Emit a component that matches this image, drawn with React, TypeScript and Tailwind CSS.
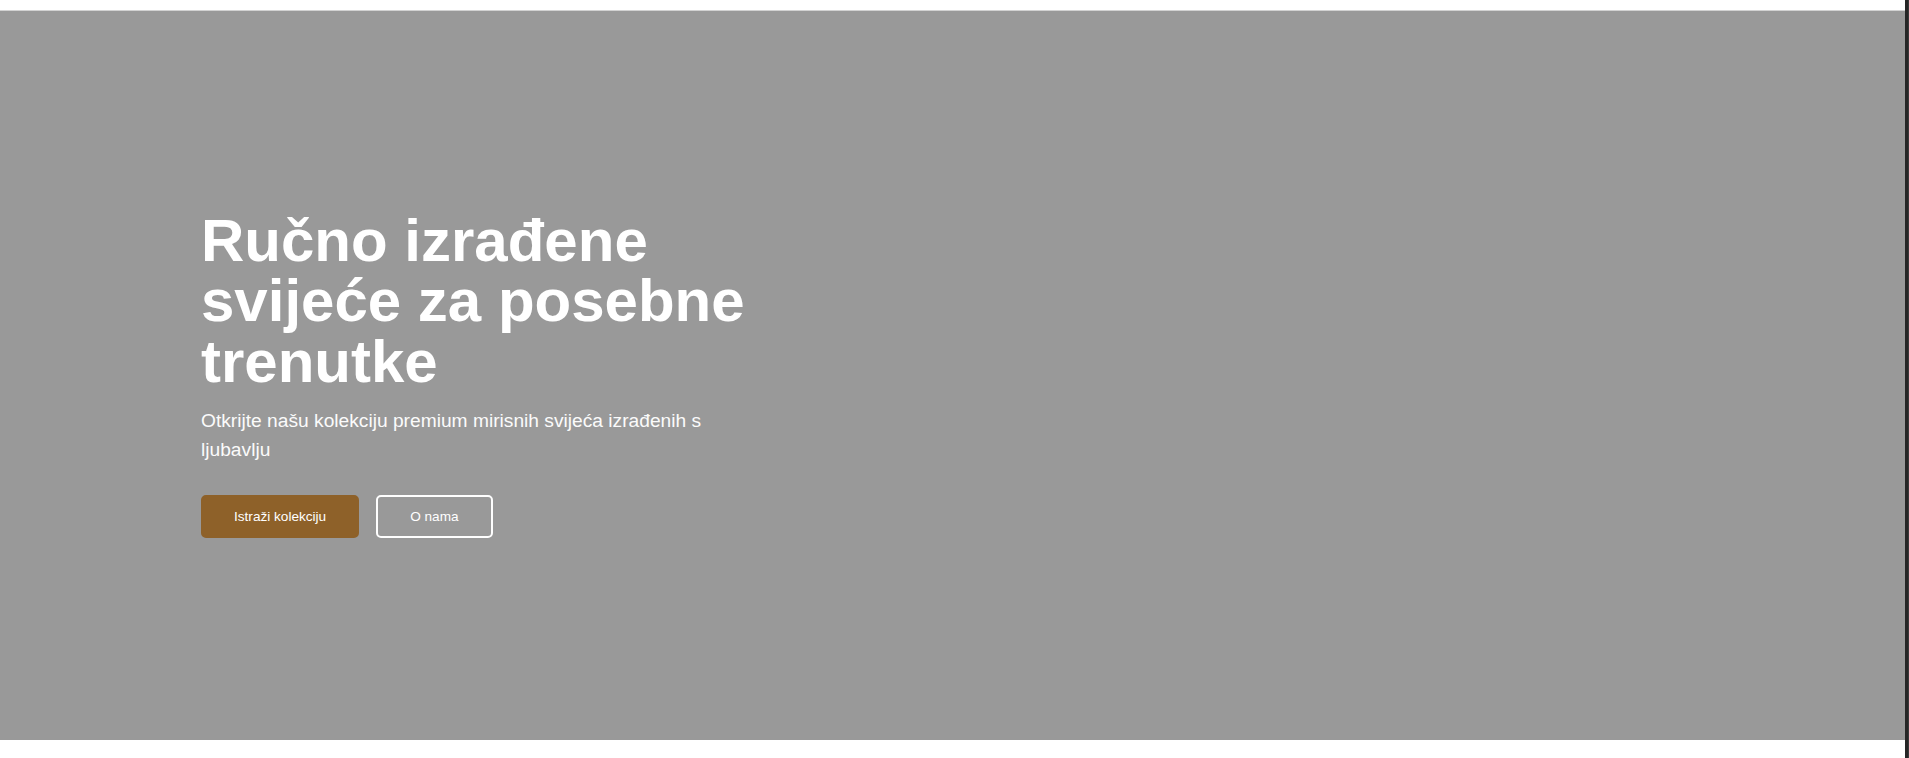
import React from "react";

export default function App() {
  return (
    <div className="flex h-[758px] w-full overflow-hidden bg-white" style={{ fontFamily: '"Liberation Sans", Arial, sans-serif' }}>
      <div className="flex min-w-0 flex-1 flex-col">
        <div className="h-[11px] shrink-0 border-b border-[#d2d2d2] bg-white" />
        <section className="flex h-[729px] shrink-0 items-center bg-[#999999] pl-[201px]">
          <div className="max-w-[560px] pb-[2px]">
            <h1 className="text-[60px] font-bold leading-[60.5px] text-white">
              Ručno izrađene svijeće za posebne trenutke
            </h1>
            <p className="mt-[15px] text-[19.2px] leading-[28.8px] text-[#fbfbfb]">
              Otkrijte našu kolekciju premium mirisnih svijeća izrađenih s ljubavlju
            </p>
            <div className="mt-[30px] flex gap-[17px]">
              <button className="rounded-[5px] border-2 border-[#8e6129] bg-[#8e6129] px-[31px] py-2.5 text-[13.6px] leading-[19px] text-white">
                Istraži kolekciju
              </button>
              <button className="rounded-[5px] border-2 border-white bg-transparent px-[32px] py-2.5 text-[13.6px] leading-[19px] text-white">
                O nama
              </button>
            </div>
          </div>
        </section>
        <div className="flex-1 bg-white" />
      </div>
      <div className="w-[4px] shrink-0 border-r border-[#3a3a3a] bg-[#262626]" />
    </div>
  );
}
